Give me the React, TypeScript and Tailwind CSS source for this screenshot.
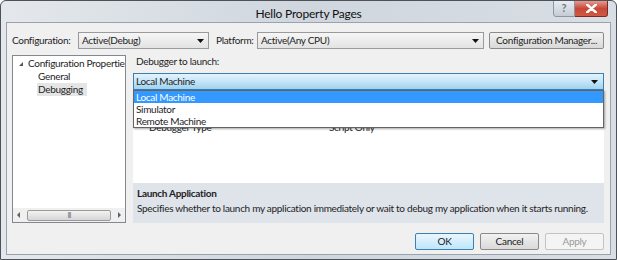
import { ReactNode } from 'react';

// small combo box used in the toolbar row
function Combo({ width, children }: { width: string; children: ReactNode }) {
  return (
    <div
      className={`${width} flex h-[17px] items-center justify-between border border-[#9a9a9a] bg-gradient-to-b from-[#f6f6f6] to-[#e3e3e3] pl-[3px] pr-[4px]`}
    >
      <span>{children}</span>
      <Arrow />
    </div>
  );
}

function Arrow() {
  return (
    <svg width="7" height="4" viewBox="0 0 7 4">
      <path d="M0 0h7L3.5 4z" fill="#111" />
    </svg>
  );
}

function Button({ children, kind }: { children: ReactNode; kind?: 'default' | 'disabled' }) {
  const tone =
    kind === 'default'
      ? 'border-[#3c7fb1] from-[#eaf6fd] to-[#bee6fd] text-[#1a1a1a]'
      : kind === 'disabled'
        ? 'border-[#c2c5c8] from-[#f4f4f4] to-[#f4f4f4] text-[#9a9a9a]'
        : 'border-[#8a8a8a] from-[#f2f2f2] to-[#d9d9d9] text-[#1a1a1a]';
  return (
    <div
      className={`flex h-[17px] w-[59px] items-center justify-center rounded-[2px] border bg-gradient-to-b ${tone}`}
    >
      {children}
    </div>
  );
}

export default function App() {
  return (
    <div
      className="relative h-[260px] w-[617px] overflow-hidden rounded-t-[6px] border border-[#4c5258] bg-gradient-to-r from-[#e4e8ec] via-[#cfd6de] to-[#d9dee4] text-[10px] tracking-[-0.3px] text-[#1e1e1e]"
      style={{ fontFamily: 'Lato, "Noto Sans", sans-serif' }}
    >
      {/* title bar */}
      <div className="relative flex h-[21px] items-center justify-center">
        <span className="mt-[4px] text-[12px] tracking-[-0.2px] text-[#111]">Hello Property Pages</span>
        <div className="absolute right-[8px] top-[-1px] flex">
          <div className="flex h-[17px] w-[22px] items-center justify-center rounded-bl-[3px] border border-[#8c97a3] bg-gradient-to-b from-[#e9edf1] to-[#c4ccd5] text-[11px] font-bold text-[#6b7784]">
            ?
          </div>
          <div className="flex h-[17px] w-[33px] items-center justify-center rounded-br-[3px] border border-l-0 border-[#7a2a22] bg-gradient-to-b from-[#e49a8e] via-[#c8473a] to-[#cf5a3f]">
            <svg width="11" height="9" viewBox="0 0 11 9">
              <path d="M1 0.5 L10 8.5 M10 0.5 L1 8.5" stroke="#fff" strokeWidth="2.4" strokeLinecap="round" />
            </svg>
          </div>
        </div>
      </div>

      {/* client area */}
      <div className="mx-[5px] flex h-[233px] flex-col border border-[#9aa3ad] bg-[#f0f0f0] px-[5px]">
        {/* configuration row */}
        <div className="mt-[9px] flex h-[17px] items-center whitespace-nowrap">
          <span className="w-[66px]">Configuration:</span>
          <Combo width="w-[131px]">Active(Debug)</Combo>
          <span className="ml-[7px] w-[41px]">Platform:</span>
          <Combo width="w-[227px]">Active(Any CPU)</Combo>
          <div className="ml-[5px] flex h-[17px] w-[115px] items-center justify-center rounded-[2px] border border-[#8a8a8a] bg-gradient-to-b from-[#f2f2f2] to-[#d9d9d9]">
            Configuration Manager...
          </div>
        </div>

        {/* main area */}
        <div className="mt-[6px] flex h-[168px]">
          {/* tree */}
          <div className="flex w-[114px] flex-col border border-[#828790] bg-white">
            <div className="flex-1 overflow-hidden pt-[1px] leading-[13px]">
              <div className="flex items-center whitespace-nowrap pl-[4px]">
                <svg width="8" height="8" viewBox="0 0 8 8" className="mr-[3px] shrink-0">
                  <path d="M6 2v4H2z" fill="#555" />
                </svg>
                Configuration Properties
              </div>
              <div className="pl-[25px]">General</div>
              <div className="ml-[24px] mr-[38px] bg-[#e5e5e5] pl-[1px]">Debugging</div>
            </div>
            {/* horizontal scrollbar */}
            <div className="flex h-[14px] items-center bg-[#f0f0f0] px-[2px]">
              <svg width="8" height="8" viewBox="0 0 8 8">
                <path d="M5 1v6L2 4z" fill="#606060" />
              </svg>
              <div className="mx-[4px] flex h-[11px] flex-1 items-center justify-center rounded-[2px] border border-[#9a9a9a] bg-gradient-to-b from-[#f3f3f3] to-[#d6d6d6]">
                <span className="text-[7px] leading-none tracking-[-1px] text-[#777]">III</span>
              </div>
              <svg width="8" height="8" viewBox="0 0 8 8">
                <path d="M3 1v6l3-3z" fill="#606060" />
              </svg>
            </div>
          </div>

          {/* right panel */}
          <div className="ml-[7px] flex w-[471px] flex-col">
            <div className="h-[18px] pl-[3px] leading-[12px]">Debugger to launch:</div>
            <div className="relative flex flex-1 flex-col">
              <div className="flex h-[17px] items-center justify-between border border-[#3c7fb1] bg-gradient-to-b from-[#e3f3fc] via-[#c4e5f8] to-[#9fd2ef] pl-[2px] pr-[5px]">
                <span>Local Machine</span>
                <Arrow />
              </div>
              {/* property grid behind the list */}
              <div className="flex-1 bg-white pl-[16px] pt-[31px] leading-[12px]">
                <div className="flex">
                  <span className="w-[180px]">Debugger Type</span>
                  <span>Script Only</span>
                </div>
              </div>
              {/* description */}
              <div className="h-[40px] bg-[#dfe3ea] px-[4px] pt-[4px] leading-[13px]">
                <div className="font-bold">Launch Application</div>
                <div className="mt-[2px] whitespace-nowrap">
                  Specifies whether to launch my application immediately or wait to debug my application when it starts running.
                </div>
              </div>

              {/* open dropdown list */}
              <div className="absolute left-0 right-0 top-[17px] border border-[#646464] bg-white leading-[12px] shadow-[1px_1px_2px_rgba(0,0,0,0.35)]">
                <div className="bg-[#3399ff] pl-[2px] text-white">Local Machine</div>
                <div className="pl-[2px]">Simulator</div>
                <div className="pl-[2px]">Remote Machine</div>
              </div>
            </div>
          </div>
        </div>

        {/* buttons */}
        <div className="mt-[10px] flex justify-end gap-[6px] pr-[1px]">
          <Button kind="default">OK</Button>
          <Button>Cancel</Button>
          <Button kind="disabled">Apply</Button>
        </div>
      </div>
    </div>
  );
}
